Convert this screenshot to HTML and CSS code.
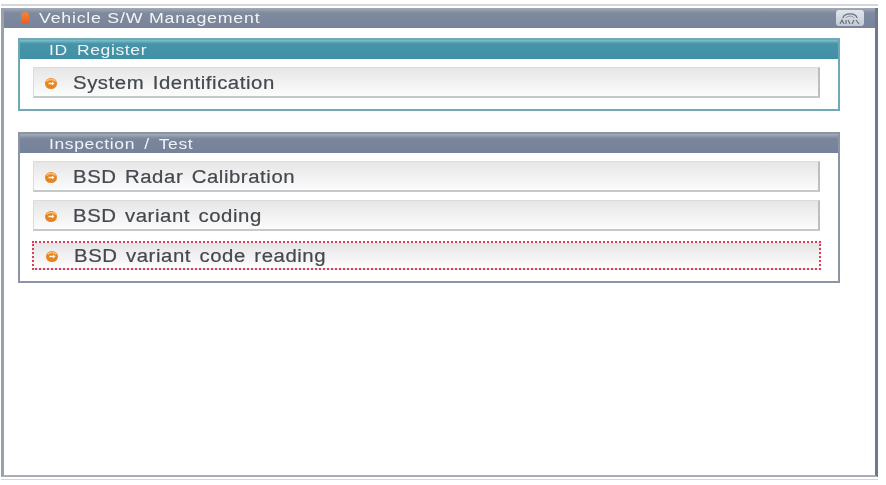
FILE: index.html
```html
<!DOCTYPE html>
<html lang="en">
<head>
    <meta charset="UTF-8">
    <title>Vehicle S/W Management</title>
    <link rel="stylesheet" href="styles.css">
</head>
<body>
    <svg class="defs" width="0" height="0">
        <symbol id="bullet" viewBox="0 0 12 11">
            <ellipse cx="6" cy="5.500" rx="6" ry="5.500" fill="#e8831f"/>
            <path d="M1.500 3.500C3 .8 9 .8 10.500 3.500" fill="none" stroke="#f8bd70" stroke-width="1.600"/>
            <path d="M3.500 4.800H7V3.500L9.500 5.500L7 7.500V6.200H3.500Z" fill="#fff6e8"/>
        </symbol>
    </svg>
    <div class="frame">
        <div class="window">
            <div class="title-bar">
                <span class="title-icon"></span>
                <span class="title-text">Vehicle S/W Management</span>
                <span class="title-btn">
                    <svg width="26" height="15" viewBox="0 0 26 15">
                        <path d="M6 7C7 1.500 19 1.500 20 7" fill="none" stroke="#6a7280" stroke-width="1.300"/>
                        <path d="M9 7C10 4.500 16 4.500 17 7" fill="none" stroke="#8a919c" stroke-width="1"/>
                        <path d="M3 13L5 9L7 13M9 9V13M11 9L13 13M15 13L17 9M19 9L22 13" fill="none" stroke="#6a7280" stroke-width="1.200"/>
                    </svg>
                </span>
            </div>
            <div class="content">
                <section class="panel panel-teal">
                    <h2 class="panel-head"><span>ID Register</span></h2>
                    <div class="panel-body">
                        <div class="item">
                            <svg class="bullet"><use href="#bullet"/></svg>
                            <span class="item-label">System Identification</span>
                        </div>
                    </div>
                </section>
                <section class="panel panel-slate">
                    <h2 class="panel-head"><span>Inspection / Test</span></h2>
                    <div class="panel-body">
                        <div class="item">
                            <svg class="bullet"><use href="#bullet"/></svg>
                            <span class="item-label">BSD Radar Calibration</span>
                        </div>
                        <div class="item">
                            <svg class="bullet"><use href="#bullet"/></svg>
                            <span class="item-label">BSD variant coding</span>
                        </div>
                        <div class="item item-focus">
                            <svg class="bullet"><use href="#bullet"/></svg>
                            <span class="item-label">BSD variant code reading</span>
                        </div>
                    </div>
                </section>
            </div>
        </div>
    </div>
</body>
</html>
```

FILE: styles.css
```css
* {
    margin: 0;
    padding: 0;
    box-sizing: border-box;
}

html,
body {
    height: 485px;
    background: #fff;
    overflow: hidden;
}

body {
    font-family: "Liberation Sans", Arial, sans-serif;
    padding: 4px 8px 5px 1px;
}

.defs {
    display: block;
    height: 0;
}

.frame {
    height: 476px;
    display: flex;
    padding: 2px 0 2px;
    border-top: 2px solid #d4d6da;
    border-bottom: 1px solid #d4d6da;
    filter: blur(0.4px);
}

.window {
    flex: 1;
    display: flex;
    flex-direction: column;
    border-left: 3px solid #98a1af;
    border-right: 3px solid #6d7a8e;
    border-bottom: 2px solid #a9aeb6;
}

.title-bar {
    height: 20px;
    flex: none;
    display: flex;
    align-items: center;
    padding: 0 11px 0 17px;
    background: linear-gradient(to bottom, #a3abb8 0, #7f8a9e 25%, #78849a 100%);
}

.title-icon {
    width: 8px;
    height: 12px;
    border-radius: 4px;
    background: linear-gradient(to bottom, #f0883a, #ee5a20);
}

.title-text {
    margin-left: 10px;
    color: #f2f4f8;
    font-size: 14px;
    letter-spacing: 0.6px;
    transform: scaleX(1.27);
    transform-origin: left center;
    white-space: nowrap;
}

.title-btn {
    width: 28px;
    height: 16px;
    margin-left: auto;
    display: flex;
    align-items: center;
    justify-content: center;
    border-radius: 3px;
    background: linear-gradient(to bottom, #e2e6eb, #c3cad5);
}

.content {
    flex: 1;
    padding: 10px 35px 0 14px;
    background: #fff;
}

.panel {
    border: 2px solid #8b95a5;
    margin-bottom: 21px;
}

.panel-teal {
    border-color: #6fa9b5;
}

.panel-head {
    height: 19px;
    padding-left: 29px;
    font-size: 14px;
    font-weight: normal;
    line-height: 21px;
    color: #eef4f8;
}

.panel-head span {
    display: inline-block;
    letter-spacing: 0.5px;
    word-spacing: 3px;
    transform: scaleX(1.25);
    transform-origin: left center;
    white-space: nowrap;
}

.panel-teal .panel-head {
    background: linear-gradient(to bottom, #7fc0cc 0, #4794a8 20%, #4090a6 100%);
}

.panel-slate .panel-head {
    background: linear-gradient(to bottom, #a5adba 0, #7a869c 25%, #75829a 100%);
}

.panel-body {
    display: flex;
    flex-direction: column;
    gap: 8px;
    padding: 8px 18px 11px 13px;
}

.item {
    height: 31px;
    display: flex;
    align-items: center;
    padding: 3px 0 0 11px;
    border: 1px solid #dcdcdd;
    border-right: 2px solid #bcbfc2;
    border-bottom: 2px solid #c6c9cb;
    background: linear-gradient(to bottom, #e6e6e6 0, #f1f1f1 50%, #fcfcfc 100%);
}

.item-focus {
    height: 29px;
    margin: 2px -1px 0 -1px;
    padding: 2px 0 0 12px;
    border: 2px dotted #dc3c5c;
}

.bullet {
    width: 12px;
    height: 11px;
    flex: none;
}

.item-label {
    margin-left: 16px;
    color: #44484f;
    font-size: 18px;
    letter-spacing: 0.5px;
    word-spacing: 2px;
    transform: scaleX(1.13);
    transform-origin: left center;
    white-space: nowrap;
    -webkit-text-stroke: 0.2px #44484f;
}
```
